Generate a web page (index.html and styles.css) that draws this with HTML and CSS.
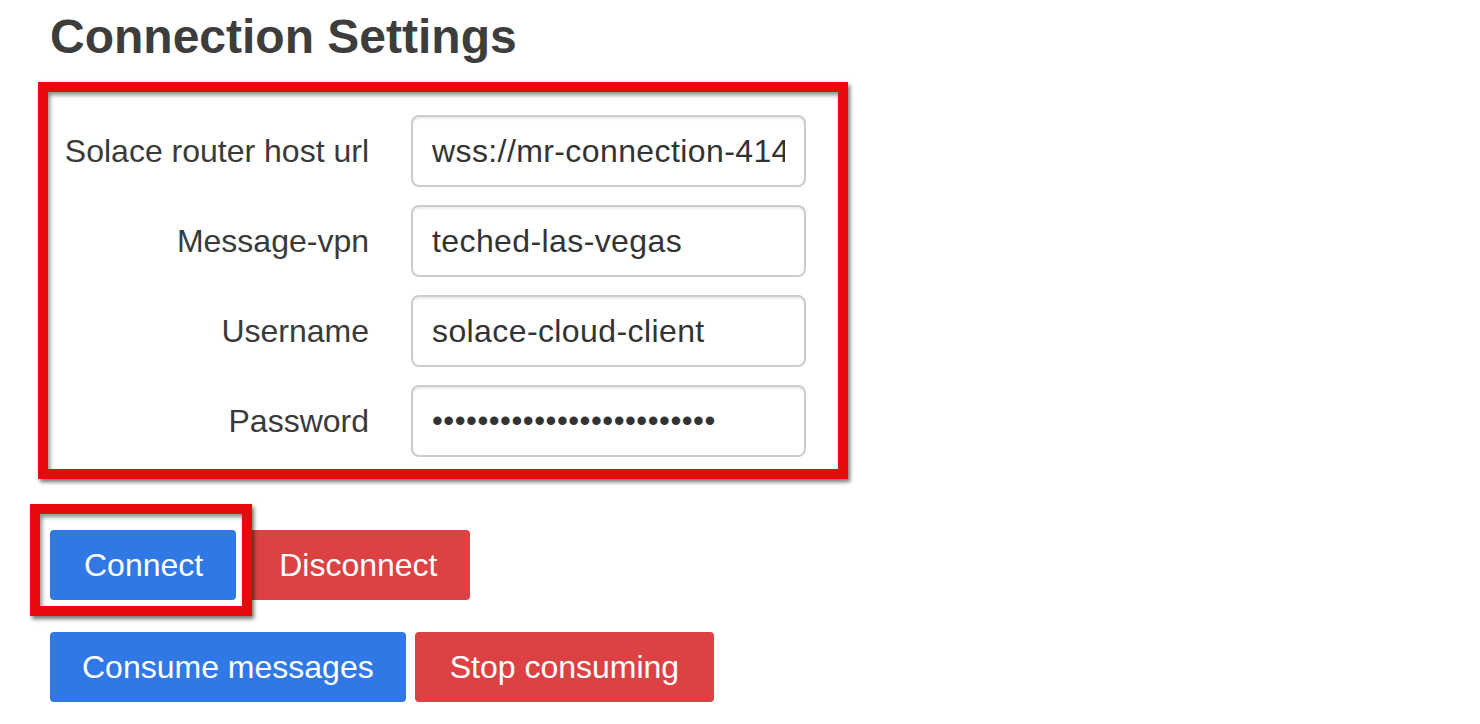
FILE: index.html
```html
<!DOCTYPE html>
<html lang="en">
<head>
<meta charset="utf-8">
<title>Connection Settings</title>
<link rel="stylesheet" href="styles.css">
</head>
<body>
<div class="page">
  <h2 class="title">Connection Settings</h2>
  <div class="frame form-frame">
    <form class="form">
      <label class="label" for="host">Solace router host url</label>
      <input class="input" id="host" type="text" value="wss://mr-connection-414xyz.messaging.solace.cloud:443">
      <label class="label" for="vpn">Message-vpn</label>
      <input class="input" id="vpn" type="text" value="teched-las-vegas">
      <label class="label" for="user">Username</label>
      <input class="input" id="user" type="text" value="solace-cloud-client">
      <label class="label" for="pass">Password</label>
      <input class="input input-password" id="pass" type="password" value="abcdefghijklmnopqrstuvwxy">
    </form>
  </div>
  <div class="btn-row first-row">
    <div class="btn-wrap">
      <button class="btn btn-primary btn-connect" type="button">Connect</button>
      <div class="frame btn-frame"></div>
    </div>
    <button class="btn btn-danger" type="button">Disconnect</button>
  </div>
  <div class="btn-row second-row">
    <button class="btn btn-primary btn-consume" type="button">Consume messages</button>
    <button class="btn btn-danger btn-stop" type="button">Stop consuming</button>
  </div>
</div>
</body>
</html>
```

FILE: styles.css
```css
* { box-sizing: border-box; }

html, body {
  margin: 0;
  padding: 0;
  background: #ffffff;
}

body {
  font-family: "Liberation Sans", Arial, Helvetica, sans-serif;
  color: #333333;
}

.page {
  padding: 10px 0 0 38px;
  width: 1480px;
  height: 724px;
  overflow: hidden;
}

.title {
  margin: 0 0 19px 12px;
  font-size: 48px;
  line-height: 53px;
  font-weight: 700;
  color: #3d3d3d;
}

.frame {
  border: 10px solid #e60a0a;
  box-shadow: 2px 3px 4px rgba(0, 0, 0, 0.55), inset 2px 3px 4px rgba(0, 0, 0, 0.45);
}

.form-frame {
  width: 810px;
  height: 397px;
}

.form {
  display: grid;
  grid-template-columns: 321px 395px;
  grid-auto-rows: 72px;
  column-gap: 42px;
  row-gap: 18px;
  padding: 23px 32px 12px 0;
  margin: 0;
}

.label {
  display: flex;
  align-items: center;
  justify-content: flex-end;
  font-size: 32px;
  color: #3a3a3a;
  white-space: nowrap;
}

.input {
  width: 395px;
  height: 72px;
  margin: 0;
  padding: 0 19px;
  border: 2px solid #cccccc;
  border-radius: 8px;
  background: #ffffff;
  box-shadow: inset 0 2px 2px rgba(0, 0, 0, 0.075);
  font-family: "Liberation Sans", Arial, Helvetica, sans-serif;
  font-size: 32px;
  letter-spacing: 0.4px;
  color: #333333;
  outline: none;
}

.input-password {
  letter-spacing: 0.5px;
  font-size: 31px;
}

.btn-row {
  display: flex;
  gap: 10px;
  margin-left: 12px;
}

.second-row { gap: 9px; }

.first-row { margin-top: 51px; }
.second-row { margin-top: 32px; }

.btn-wrap {
  position: relative;
  display: flex;
}

.btn {
  height: 70px;
  padding: 0 33px;
  border: none;
  border-radius: 4px;
  font-family: "Liberation Sans", Arial, Helvetica, sans-serif;
  font-size: 32px;
  color: #ffffff;
  cursor: pointer;
}

.btn-primary { background: #3079e4; }
.btn-danger { background: #dc4244; }

.btn-connect { padding: 0 33px 0 34px; }
.btn-consume { padding: 0 32px; }
.btn-stop { padding: 0 35px; }

.btn-frame {
  position: absolute;
  left: -20px;
  top: -26px;
  width: 222px;
  height: 112px;
  z-index: 2;
  pointer-events: none;
}
```
